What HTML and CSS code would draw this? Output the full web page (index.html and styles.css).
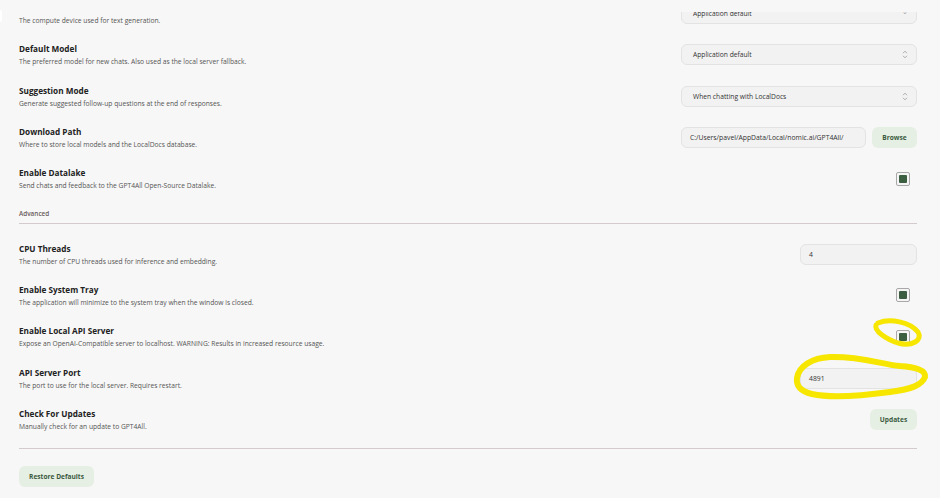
FILE: index.html
```html
<!DOCTYPE html>
<html>
<head>
<meta charset="utf-8">
<link rel="stylesheet" href="styles.css">
</head>
<body>
<div class="page">
  <div class="edge"></div>
  <div class="topbar"></div>
  <div class="viewport">
    <div class="content">
      <div class="row">
        <div class="label"><div class="title hidden-title"></div><div class="desc">The compute device used for text generation.</div></div>
        <div class="select"><span>Application default</span><span class="arrows">&#8964;</span></div>
      </div>
      <div class="row">
        <div class="label"><div class="title">Default Model</div><div class="desc">The preferred model for new chats. Also used as the local server fallback.</div></div>
        <div class="select"><span>Application default</span><svg class="updown" width="6" height="9" viewBox="0 0 6 9"><path d="M1 3.2 L3 1.2 L5 3.2 M1 5.8 L3 7.8 L5 5.8" fill="none" stroke="#999" stroke-width="0.8"/></svg></div>
      </div>
      <div class="row">
        <div class="label"><div class="title">Suggestion Mode</div><div class="desc">Generate suggested follow-up questions at the end of responses.</div></div>
        <div class="select"><span>When chatting with LocalDocs</span><svg class="updown" width="6" height="9" viewBox="0 0 6 9"><path d="M1 3.2 L3 1.2 L5 3.2 M1 5.8 L3 7.8 L5 5.8" fill="none" stroke="#999" stroke-width="0.8"/></svg></div>
      </div>
      <div class="row">
        <div class="label"><div class="title">Download Path</div><div class="desc">Where to store local models and the LocalDocs database.</div></div>
        <div class="pathgroup"><div class="field path">C:/Users/pavel/AppData/Local/nomic.ai/GPT4All/</div><button class="btn browse">Browse</button></div>
      </div>
      <div class="row">
        <div class="label"><div class="title">Enable Datalake</div><div class="desc">Send chats and feedback to the GPT4All Open-Source Datalake.</div></div>
        <div class="check"><div class="tick"></div></div>
      </div>
      <div class="section">
        <div class="section-title">Advanced</div>
        <div class="rule"></div>
      </div>
      <div class="row">
        <div class="label"><div class="title">CPU Threads</div><div class="desc">The number of CPU threads used for inference and embedding.</div></div>
        <div class="field small">4</div>
      </div>
      <div class="row">
        <div class="label"><div class="title">Enable System Tray</div><div class="desc">The application will minimize to the system tray when the window is closed.</div></div>
        <div class="check"><div class="tick"></div></div>
      </div>
      <div class="row">
        <div class="label"><div class="title">Enable Local API Server</div><div class="desc">Expose an OpenAI-Compatible server to localhost. WARNING: Results in increased resource usage.</div></div>
        <div class="check"><div class="tick"></div></div>
      </div>
      <div class="row">
        <div class="label"><div class="title">API Server Port</div><div class="desc">The port to use for the local server. Requires restart.</div></div>
        <div class="field small">4891</div>
      </div>
      <div class="row">
        <div class="label"><div class="title">Check For Updates</div><div class="desc">Manually check for an update to GPT4All.</div></div>
        <button class="btn updates">Updates</button>
      </div>
      <div class="rule bottom"></div>
      <div class="footer"><button class="btn restore">Restore Defaults</button></div>
    </div>
  </div>
  <svg class="marks" width="940" height="498" viewBox="0 0 940 498">
    <path d="M878 323 C 890 318, 910 322, 918 332 C 923 340, 912 347, 898 343 C 886 339, 874 331, 876 325" fill="none" stroke="#f6e600" stroke-width="5" stroke-linecap="round" stroke-linejoin="round"/>
    <path d="M797 378 C 799 366, 812 358, 830 357 C 860 356, 880 364, 900 366 C 915 367, 926 370, 925 377 C 922 385, 912 389, 890 392 C 860 396, 830 398, 812 394 C 800 391, 796 386, 797 378" fill="none" stroke="#f6e600" stroke-width="6" stroke-linecap="round" stroke-linejoin="round"/>
  </svg>
</div>
</body>
</html>
```
FILE: styles.css
```css
html, body {
  margin: 0;
  padding: 0;
  background: #f7f7f7;
}
.page {
  position: relative;
  width: 940px;
  height: 498px;
  overflow: hidden;
  font-family: "Open Sans", "Noto Sans", sans-serif;
  color: #222;
}
.edge {
  position: absolute;
  left: 0;
  top: 10px;
  width: 2px;
  height: 12px;
  background: #fff;
  border-radius: 0 2px 2px 0;
}
.topbar {
  height: 12px;
}
.viewport {
  height: 486px;
  overflow: hidden;
}
.content {
  margin-top: -19px;
  padding: 0 23px 0 19px;
}
.row {
  height: 41.3px;
  display: flex;
  align-items: center;
  justify-content: space-between;
}
.label {
  display: flex;
  flex-direction: column;
  gap: 3px;
}
.title {
  font-size: 8.2px;
  font-weight: 700;
  color: #222;
  line-height: 11px;
}
.hidden-title {
  height: 11px;
}
.desc {
  font-size: 6.7px;
  color: #555;
  line-height: 9px;
}
.select {
  width: 236px;
  height: 21px;
  box-sizing: border-box;
  border: 1px solid #e3e3e3;
  border-radius: 6px;
  background: #f2f2f2;
  display: flex;
  align-items: center;
  justify-content: space-between;
  padding: 0 8px 0 11px;
  font-size: 6.7px;
  color: #333;
}
.arrows {
  color: #999;
  font-size: 7px;
  line-height: 7px;
  margin-top: -4px;
}
.pathgroup {
  display: flex;
  gap: 6px;
  align-items: center;
}
.field {
  height: 21px;
  box-sizing: border-box;
  border: 1px solid #e3e3e3;
  border-radius: 6px;
  background: #f2f2f2;
  display: flex;
  align-items: center;
  font-size: 6.8px;
  color: #333;
}
.field.path {
  width: 185px;
  padding-left: 8px;
}
.field.small {
  width: 117px;
  padding-left: 8px;
}
.btn {
  height: 21px;
  border: none;
  border-radius: 6px;
  background: #e6efe4;
  color: #3a5a3e;
  font-family: "Open Sans", "Noto Sans", sans-serif;
  font-weight: 700;
  font-size: 6.6px;
  padding: 0;
}
.browse {
  width: 45px;
}
.updates {
  width: 47px;
}
.restore {
  width: 75px;
  height: 21px;
}
.check {
  width: 14px;
  height: 14px;
  box-sizing: border-box;
  border: 1px solid #a8a8a8;
  border-radius: 2px;
  background: #f5f5f5;
  display: flex;
  align-items: center;
  justify-content: center;
  margin-right: 7px;
}
.tick {
  width: 8px;
  height: 8px;
  background: #3d5f41;
  border-radius: 1px;
}
.section {
  padding-top: 8px;
}
.section-title {
  font-size: 6.4px;
  font-weight: 600;
  color: #6b5b5b;
  line-height: 14px;
}
.rule {
  height: 1px;
  background: #d4cccc;
  margin-top: 2px;
  margin-bottom: 9px;
}
.rule.bottom {
  margin-top: 8px;
  margin-bottom: 0;
}
.footer {
  padding-top: 13px;
}
.marks {
  position: absolute;
  left: 0;
  top: 0;
  pointer-events: none;
}
```
